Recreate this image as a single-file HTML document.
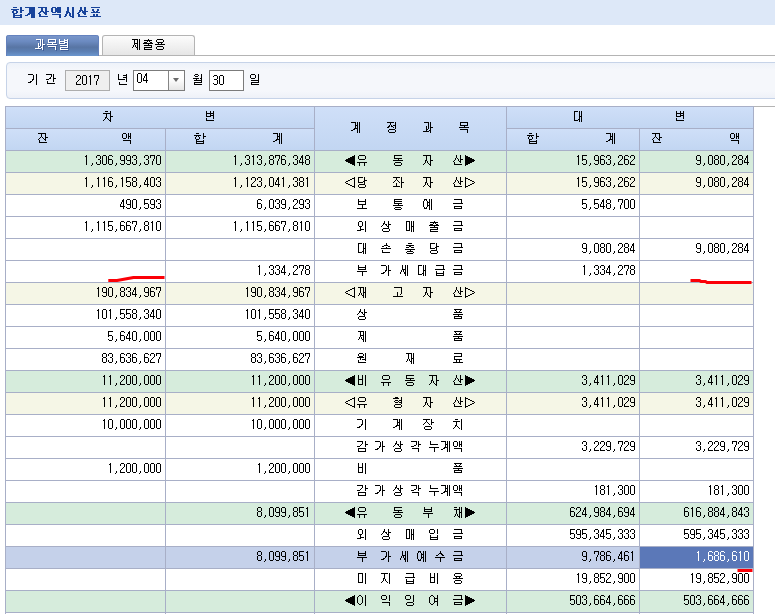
<!DOCTYPE html>
<html lang="ko">
<head>
<meta charset="utf-8">
<title>합계잔액시산표</title>
<style>
html,body{margin:0;padding:0}
body{width:775px;height:614px;overflow:hidden;background:#fff;position:relative;font-family:"Liberation Sans",sans-serif;font-size:12px;color:#000}
.h{position:absolute;width:1px;height:1px;margin:-1px;padding:0;overflow:hidden;clip:rect(0 0 0 0);clip-path:inset(50%);white-space:nowrap;font-size:1px;line-height:1px;color:transparent}
svg.t{display:inline-block;vertical-align:top;fill:#000;stroke:none;shape-rendering:crispEdges;overflow:visible}
svg.t.w{fill:#fff}
svg.t.b{fill:#17439b}
.title{position:absolute;left:0;top:0;width:775px;height:25px;background:#dde8f8}
.title svg{position:absolute;left:11px;top:7px}
.tabs{position:absolute;left:6px;top:35px;width:769px;height:20px;border-bottom:1px solid #b4b4b4}
.tab{position:absolute;top:0;height:20px;box-sizing:border-box;text-align:left;border:1px solid #b4b4b4;border-bottom:0;border-radius:3px 3px 0 0;background:linear-gradient(#fcfcfc,#e6e6e6);left:96px;width:93px}
.tab svg{margin-top:3px}
.tab.on{left:0;width:93px;height:21px;border:0;background:linear-gradient(#5b79b9 0,#7895c9 7%,#6c8bc1 30%,#5875a4 58%,#5c7fb3 78%,#6b96ce 100%);box-shadow:inset 1px 0 0 #6380bb,inset -1px 0 0 #6380bb}
.tab.on svg{margin-top:4px;filter:drop-shadow(1px 1px 0 rgba(40,70,135,.55))}
.filter{position:absolute;left:6px;top:62px;width:800px;height:35px;border:1px solid #c6d3e8;border-radius:4px;background:linear-gradient(#eef2f9,#f5f7fb 20%,#f5f7fb 80%,#eef1f8)}
.filter>span{position:absolute}
.lb{top:11px}
.inp,.sel{top:7px;height:19px;border:1px solid #7b7b7b;background:#fff;box-sizing:content-box}
.inp svg{position:absolute;left:2px;top:4px}
.inp.ro{background:#efefef;border-color:#adadad}
.inp.ro svg{left:9px;top:4px}
.sel svg{position:absolute;left:2px;top:2px}
.dd{position:absolute;right:0;top:0;width:15px;height:19px;border-left:1px solid #858585;background:linear-gradient(#fff 40%,#e6e6e6)}
.dd b{position:absolute;left:4px;top:7px;width:0;height:0;border-left:3.5px solid transparent;border-right:3.5px solid transparent;border-top:4px solid #6a6a6a}
.grid{position:absolute;left:5px;top:106px;width:770px;height:508px;overflow:hidden}
.grid:before{content:"";position:absolute;left:0;top:0;width:770px;height:1px;background:#b4b4b4}
table{position:absolute;left:0;top:0;border-collapse:separate;table-layout:fixed;width:749px;border-left:1px solid #a8afc7;border-top:1px solid #a8afc7}
th,td{height:21px;padding:0;border-right:1px solid #a8afc7;border-bottom:1px solid #a8afc7;text-align:right;font-weight:normal;line-height:0;vertical-align:top;overflow:hidden;white-space:nowrap}
th{background:linear-gradient(#cfdff8,#c2d6f2);text-align:left}
th svg{margin-top:4px}
th.h2 svg{margin-top:15px}
td svg{margin:4px 4px 0 0}
td.n{text-align:left}
td.n svg{margin-right:0}
tr.g td{background:#d6ecdc}
tr.c td{background:#f5f6e6}
tr.s td{background:#c5d1ea}
tr.s td.cur{background:#5b78b8}
.marks{position:absolute;left:0;top:0;pointer-events:none}
.marks path{fill:none;stroke:#fb0007;stroke-width:3;stroke-linejoin:round}

</style>
</head>
<body>
<svg width="0" height="0" style="position:absolute" aria-hidden="true"><defs><path id="g23" d="M5 1v3h1v-3zM5 5v4h1v-4zM2 0h3v1h-3zM1 1h1v1h-1zM2 4h3v1h-3zM1 8h1v1h-1zM2 9h3v1h-3z"/><path id="g2c" d="M3 8v2h1v-2zM2 10h1v1h-1z"/><path id="g30" d="M1 1v8h1v-8zM5 1v8h1v-8zM2 0h3v1h-3zM2 9h3v1h-3z"/><path id="g31" d="M3 0v10h1v-10zM2 1h1v1h-1z"/><path id="g32" d="M1 1v2h1v-2zM1 7v3h1v-3zM5 1v3h1v-3zM2 0h3v1h-3zM4 4h1v1h-1zM3 5h1v1h-1zM2 6h1v1h-1zM2 9h4v1h-4z"/><path id="g33" d="M1 1v2h1v-2zM1 7v2h1v-2zM5 1v3h1v-3zM5 5v4h1v-4zM2 0h3v1h-3zM3 4h2v1h-2zM2 9h3v1h-3z"/><path id="g34" d="M1 5v3h1v-3zM2 3v2h1v-2zM3 1v2h1v-2zM4 0v10h1v-10zM2 7h2v1h-2zM5 7h1v1h-1z"/><path id="g35" d="M1 0v6h1v-6zM5 5v4h1v-4zM2 0h4v1h-4zM2 4h3v1h-3zM1 8h1v1h-1zM2 9h3v1h-3z"/><path id="g36" d="M1 1v8h1v-8zM5 5v4h1v-4zM2 0h3v1h-3zM5 1h1v1h-1zM2 4h3v1h-3zM2 9h3v1h-3z"/><path id="g37" d="M1 0v3h1v-3zM3 6v4h1v-4zM4 4v2h1v-2zM5 0v4h1v-4zM2 0h3v1h-3z"/><path id="g38" d="M1 1v3h1v-3zM1 5v4h1v-4zM5 1v3h1v-3zM5 5v4h1v-4zM2 0h3v1h-3zM2 4h3v1h-3zM2 9h3v1h-3z"/><path id="g39" d="M1 1v4h1v-4zM5 1v8h1v-8zM2 0h3v1h-3zM2 5h3v1h-3zM1 8h1v1h-1zM2 9h3v1h-3z"/><path id="g25b6" d="M1 0v11h1v-11zM2 1v9h1v-9zM3 1v9h1v-9zM4 2v7h1v-7zM5 2v7h1v-7zM6 3v5h1v-5zM7 3v5h1v-5zM8 4v3h1v-3zM9 4v3h1v-3zM10 5h1v1h-1z"/><path id="g25b7" d="M1 0v11h1v-11zM2 1h2v1h-2zM4 2h2v1h-2zM6 3h2v1h-2zM8 4h2v1h-2zM10 5h1v1h-1zM8 6h2v1h-2zM6 7h2v1h-2zM4 8h2v1h-2zM2 9h2v1h-2z"/><path id="g25c0" d="M2 4v3h1v-3zM3 4v3h1v-3zM4 3v5h1v-5zM5 3v5h1v-5zM6 2v7h1v-7zM7 2v7h1v-7zM8 1v9h1v-9zM9 1v9h1v-9zM10 0v11h1v-11zM1 5h1v1h-1z"/><path id="g25c1" d="M10 0v11h1v-11zM8 1h2v1h-2zM6 2h2v1h-2zM4 3h2v1h-2zM2 4h2v1h-2zM1 5h1v1h-1zM2 6h2v1h-2zM4 7h2v1h-2zM6 8h2v1h-2zM8 9h2v1h-2z"/><path id="gac00" d="M3 7v2h1v-2zM5 5v2h1v-2zM6 1v5h1v-5zM8 0v11h1v-11zM1 0h5v1h-5zM9 5h2v1h-2zM4 7h1v1h-1zM1 8h2v1h-2z"/><path id="gac01" d="M6 0v4h1v-4zM8 0v6h1v-6zM8 7v4h1v-4zM1 0h5v1h-5zM9 3h2v1h-2zM4 4h2v1h-2zM1 5h3v1h-3zM2 7h6v1h-6z"/><path id="gac04" d="M2 7v3h1v-3zM5 3v2h1v-2zM6 0v3h1v-3zM8 0v8h1v-8zM1 0h5v1h-5zM4 4h1v1h-1zM9 4h2v1h-2zM1 5h3v1h-3zM3 9h7v1h-7z"/><path id="gac10" d="M2 7v4h1v-4zM6 0v3h1v-3zM9 0v6h1v-6zM9 7v4h1v-4zM1 0h5v1h-5zM5 3h1v1h-1zM10 3h2v1h-2zM4 4h1v1h-1zM1 5h3v1h-3zM3 7h6v1h-6zM3 10h6v1h-6z"/><path id="gacc4" d="M4 6v2h1v-2zM5 0v7h1v-7zM7 0v11h1v-11zM9 0v11h1v-11zM1 0h4v1h-4zM6 3h1v1h-1zM6 6h1v1h-1zM3 7h1v1h-1zM1 8h2v1h-2z"/><path id="gace0" d="M5 5v5h1v-5zM9 0v7h1v-7zM2 0h7v1h-7zM8 7h1v1h-1zM1 9h4v1h-4zM6 9h5v1h-5z"/><path id="gacfc" d="M4 4v6h1v-6zM6 0v7h1v-7zM8 0v11h1v-11zM2 0h4v1h-4zM9 5h2v1h-2zM5 7h1v1h-1zM7 8h1v1h-1zM1 9h3v1h-3zM5 9h2v1h-2z"/><path id="gae08" d="M2 7v3h1v-3zM9 0v5h1v-5zM9 7v3h1v-3zM2 0h7v1h-7zM1 4h8v1h-8zM10 4h1v1h-1zM3 7h6v1h-6zM3 9h6v1h-6z"/><path id="gae09" d="M2 6v5h1v-5zM9 0v5h1v-5zM9 6v5h1v-5zM2 0h7v1h-7zM1 4h8v1h-8zM10 4h1v1h-1zM3 8h6v1h-6zM3 10h6v1h-6z"/><path id="gae30" d="M3 7v2h1v-2zM5 5v2h1v-2zM6 1v5h1v-5zM9 0v11h1v-11zM1 0h5v1h-5zM4 7h1v1h-1zM1 8h2v1h-2z"/><path id="gb144" d="M1 0v6h1v-6zM2 8v3h1v-3zM9 0v8h1v-8zM6 1h3v1h-3zM6 3h3v1h-3zM2 5h6v1h-6zM3 10h7v1h-7z"/><path id="gb204" d="M2 0v4h1v-4zM6 6v5h1v-5zM3 3h7v1h-7zM1 6h5v1h-5zM7 6h4v1h-4z"/><path id="gb2f9" d="M2 0v6h1v-6zM2 8v2h1v-2zM8 0v8h1v-8zM9 8v2h1v-2zM3 0h4v1h-4zM9 3h2v1h-2zM7 4h1v1h-1zM3 5h4v1h-4zM3 7h5v1h-5zM3 10h6v1h-6z"/><path id="gb300" d="M2 0v10h1v-10zM7 0v11h1v-11zM9 0v11h1v-11zM3 0h3v1h-3zM8 5h1v1h-1zM6 8h1v1h-1zM3 9h3v1h-3z"/><path id="gb3d9" d="M2 0v4h1v-4zM2 8v2h1v-2zM6 3v3h1v-3zM9 8v2h1v-2zM3 0h7v1h-7zM3 3h3v1h-3zM7 3h3v1h-3zM1 5h5v1h-5zM7 5h4v1h-4zM3 7h6v1h-6zM3 10h6v1h-6z"/><path id="gb8cc" d="M2 3v4h1v-4zM4 6v4h1v-4zM7 6v4h1v-4zM9 0v4h1v-4zM2 0h7v1h-7zM3 3h6v1h-6zM3 6h1v1h-1zM5 6h2v1h-2zM8 6h2v1h-2zM1 9h3v1h-3zM5 9h2v1h-2zM8 9h3v1h-3z"/><path id="gb9e4" d="M2 0v10h1v-10zM5 0v10h1v-10zM7 0v11h1v-11zM9 0v11h1v-11zM3 0h2v1h-2zM8 5h1v1h-1zM3 9h2v1h-2z"/><path id="gbaa9" d="M2 0v4h1v-4zM6 3v3h1v-3zM9 0v4h1v-4zM9 7v4h1v-4zM3 0h6v1h-6zM3 3h3v1h-3zM7 3h2v1h-2zM1 5h5v1h-5zM7 5h4v1h-4zM2 7h7v1h-7z"/><path id="gbbf8" d="M2 0v10h1v-10zM6 0v10h1v-10zM9 0v11h1v-11zM3 0h3v1h-3zM3 9h3v1h-3z"/><path id="gbcc0" d="M2 0v6h1v-6zM2 7v3h1v-3zM6 0v6h1v-6zM9 0v8h1v-8zM3 2h3v1h-3zM7 2h2v1h-2zM7 4h2v1h-2zM3 5h3v1h-3zM3 9h7v1h-7z"/><path id="gbcc4" d="M1 0v5h1v-5zM2 8v3h1v-3zM6 0v5h1v-5zM9 0v9h1v-9zM7 1h2v1h-2zM2 2h4v1h-4zM7 3h2v1h-2zM2 4h4v1h-4zM2 6h7v1h-7zM3 8h6v1h-6zM3 10h7v1h-7z"/><path id="gbcf4" d="M2 0v6h1v-6zM6 5v5h1v-5zM9 0v6h1v-6zM3 2h6v1h-6zM3 5h3v1h-3zM7 5h2v1h-2zM1 9h5v1h-5zM7 9h4v1h-4z"/><path id="gbd80" d="M2 0v5h1v-5zM6 6v5h1v-5zM9 0v5h1v-5zM3 2h6v1h-6zM3 4h6v1h-6zM1 6h5v1h-5zM7 6h4v1h-4z"/><path id="gbe44" d="M2 0v10h1v-10zM6 0v10h1v-10zM9 0v11h1v-11zM3 4h3v1h-3zM3 9h3v1h-3z"/><path id="gc0b0" d="M2 7v3h1v-3zM3 3v2h1v-2zM4 0v3h1v-3zM6 4v2h1v-2zM8 0v8h1v-8zM5 3h1v1h-1zM9 4h2v1h-2zM2 5h1v1h-1zM1 6h1v1h-1zM7 6h1v1h-1zM3 9h7v1h-7z"/><path id="gc0c1" d="M2 8v2h1v-2zM3 2v2h1v-2zM4 0v3h1v-3zM6 3v2h1v-2zM8 0v8h1v-8zM9 8v2h1v-2zM5 3h1v1h-1zM9 3h2v1h-2zM2 4h1v1h-1zM1 5h1v1h-1zM7 5h1v1h-1zM3 7h5v1h-5zM3 10h6v1h-6z"/><path id="gc138" d="M2 7v2h1v-2zM3 5v2h1v-2zM4 0v5h1v-5zM5 4v3h1v-3zM6 7v2h1v-2zM7 0v11h1v-11zM9 0v11h1v-11zM6 4h1v1h-1z"/><path id="gc190" d="M2 7v3h1v-3zM6 0v3h1v-3zM6 4v2h1v-2zM4 2h2v1h-2zM7 2h1v1h-1zM2 3h2v1h-2zM8 3h2v1h-2zM1 5h5v1h-5zM7 5h4v1h-4zM3 9h7v1h-7z"/><path id="gc218" d="M6 0v3h1v-3zM6 6v5h1v-5zM7 2v2h1v-2zM8 3v2h1v-2zM5 2h1v1h-1zM4 3h1v1h-1zM2 4h2v1h-2zM9 4h1v1h-1zM1 6h5v1h-5zM7 6h4v1h-4z"/><path id="gc2dc" d="M2 7v2h1v-2zM3 4v3h1v-3zM4 0v5h1v-5zM6 6v3h1v-3zM9 0v11h1v-11zM5 5h1v1h-1zM1 9h1v1h-1zM7 9h1v1h-1z"/><path id="gc561" d="M1 1v4h1v-4zM5 1v4h1v-4zM7 0v6h1v-6zM9 0v6h1v-6zM9 7v4h1v-4zM2 0h3v1h-3zM8 3h1v1h-1zM2 5h3v1h-3zM2 7h7v1h-7z"/><path id="gc5ec" d="M1 2v6h1v-6zM6 2v6h1v-6zM9 0v11h1v-11zM3 0h2v1h-2zM2 1h1v1h-1zM5 1h1v1h-1zM7 3h2v1h-2zM7 6h2v1h-2zM2 8h1v1h-1zM5 8h1v1h-1zM3 9h2v1h-2z"/><path id="gc608" d="M1 2v6h1v-6zM2 0v2h1v-2zM2 8v2h1v-2zM4 0v2h1v-2zM4 8v2h1v-2zM5 2v6h1v-6zM7 0v11h1v-11zM9 0v11h1v-11zM3 0h1v1h-1zM6 3h1v1h-1zM6 6h1v1h-1zM3 9h1v1h-1z"/><path id="gc678" d="M2 1v4h1v-4zM4 5v5h1v-5zM6 1v4h1v-4zM9 0v11h1v-11zM3 0h3v1h-3zM3 5h1v1h-1zM5 5h1v1h-1zM5 8h3v1h-3zM1 9h3v1h-3z"/><path id="gc6a9" d="M2 1v2h1v-2zM2 8v2h1v-2zM4 3v3h1v-3zM7 3v3h1v-3zM9 1v2h1v-2zM9 8v2h1v-2zM3 0h6v1h-6zM3 3h1v1h-1zM5 3h2v1h-2zM8 3h1v1h-1zM1 5h3v1h-3zM5 5h2v1h-2zM8 5h3v1h-3zM3 7h6v1h-6zM3 10h6v1h-6z"/><path id="gc6d0" d="M2 1v2h1v-2zM2 7v3h1v-3zM3 3v2h1v-2zM4 3v4h1v-4zM5 3v2h1v-2zM6 3v2h1v-2zM7 1v2h1v-2zM9 0v8h1v-8zM3 0h4v1h-4zM1 4h2v1h-2zM7 4h1v1h-1zM6 6h3v1h-3zM3 9h7v1h-7z"/><path id="gc6d4" d="M1 8v3h1v-3zM3 4v3h1v-3zM8 0v9h1v-9zM2 0h3v1h-3zM1 1h1v1h-1zM5 1h1v1h-1zM2 2h3v1h-3zM0 4h3v1h-3zM4 4h2v1h-2zM7 4h1v1h-1zM1 6h2v1h-2zM4 6h4v1h-4zM2 8h6v1h-6zM2 10h7v1h-7z"/><path id="gc720" d="M2 1v3h1v-3zM3 7v4h1v-4zM8 7v4h1v-4zM9 1v3h1v-3zM3 0h6v1h-6zM3 4h6v1h-6zM1 7h2v1h-2zM4 7h4v1h-4zM9 7h2v1h-2z"/><path id="gc774" d="M1 2v6h1v-6zM6 2v6h1v-6zM9 0v11h1v-11zM3 0h2v1h-2zM2 1h1v1h-1zM5 1h1v1h-1zM2 8h1v1h-1zM5 8h1v1h-1zM3 9h2v1h-2z"/><path id="gc775" d="M1 1v3h1v-3zM6 1v3h1v-3zM9 0v6h1v-6zM9 7v4h1v-4zM2 0h4v1h-4zM2 4h4v1h-4zM2 7h7v1h-7z"/><path id="gc77c" d="M1 1v3h1v-3zM2 8v3h1v-3zM6 1v3h1v-3zM9 0v9h1v-9zM2 0h4v1h-4zM2 4h4v1h-4zM2 6h7v1h-7zM3 8h6v1h-6zM3 10h7v1h-7z"/><path id="gc785" d="M1 1v3h1v-3zM2 6v5h1v-5zM6 1v3h1v-3zM9 0v5h1v-5zM9 6v5h1v-5zM2 0h4v1h-4zM2 4h4v1h-4zM3 8h6v1h-6zM3 10h6v1h-6z"/><path id="gc789" d="M1 1v3h1v-3zM2 8v2h1v-2zM6 1v3h1v-3zM9 0v7h1v-7zM9 8v2h1v-2zM2 0h4v1h-4zM2 4h4v1h-4zM3 7h6v1h-6zM3 10h6v1h-6z"/><path id="gc790" d="M3 5v3h1v-3zM4 0v6h1v-6zM5 6v2h1v-2zM8 0v11h1v-11zM1 0h3v1h-3zM5 0h3v1h-3zM9 5h2v1h-2zM2 8h1v1h-1zM6 8h1v1h-1zM1 9h1v1h-1zM7 9h1v1h-1z"/><path id="gc794" d="M2 7v3h1v-3zM4 0v4h1v-4zM8 0v8h1v-8zM1 0h3v1h-3zM5 0h3v1h-3zM3 4h1v1h-1zM5 4h1v1h-1zM9 4h2v1h-2zM2 5h1v1h-1zM6 5h1v1h-1zM1 6h1v1h-1zM7 6h1v1h-1zM3 9h7v1h-7z"/><path id="gc7a5" d="M2 8v2h1v-2zM4 0v3h1v-3zM9 0v6h1v-6zM9 8v2h1v-2zM1 0h3v1h-3zM5 0h3v1h-3zM3 3h1v1h-1zM5 3h1v1h-1zM10 3h2v1h-2zM2 4h1v1h-1zM6 4h1v1h-1zM1 5h1v1h-1zM7 5h1v1h-1zM3 7h6v1h-6zM3 10h6v1h-6z"/><path id="gc7ac" d="M3 6v2h1v-2zM4 0v6h1v-6zM5 6v2h1v-2zM7 0v11h1v-11zM9 0v11h1v-11zM2 0h2v1h-2zM5 0h2v1h-2zM8 5h1v1h-1zM2 8h1v1h-1zM6 8h1v1h-1z"/><path id="gc815" d="M2 4v2h1v-2zM2 8v2h1v-2zM3 3v2h1v-2zM4 0v3h1v-3zM5 3v2h1v-2zM9 0v7h1v-7zM9 8v2h1v-2zM1 0h3v1h-3zM5 0h3v1h-3zM7 3h2v1h-2zM6 4h1v1h-1zM1 5h1v1h-1zM7 5h1v1h-1zM3 7h6v1h-6zM3 10h6v1h-6z"/><path id="gc81c" d="M3 6v2h1v-2zM4 0v6h1v-6zM5 6v2h1v-2zM7 0v11h1v-11zM9 0v11h1v-11zM2 0h2v1h-2zM5 0h2v1h-2zM5 4h2v1h-2zM2 8h1v1h-1zM6 8h1v1h-1z"/><path id="gc88c" d="M4 0v3h1v-3zM4 6v4h1v-4zM9 0v11h1v-11zM1 0h3v1h-3zM5 0h3v1h-3zM3 3h1v1h-1zM5 3h1v1h-1zM2 4h1v1h-1zM6 4h1v1h-1zM1 5h1v1h-1zM7 5h1v1h-1zM10 5h2v1h-2zM1 9h3v1h-3zM5 9h3v1h-3z"/><path id="gc9c0" d="M3 5v3h1v-3zM4 0v6h1v-6zM5 6v2h1v-2zM9 0v11h1v-11zM1 0h3v1h-3zM5 0h3v1h-3zM2 8h1v1h-1zM6 8h1v1h-1zM1 9h1v1h-1zM7 9h1v1h-1z"/><path id="gcc28" d="M3 6v2h1v-2zM4 2v5h1v-5zM8 0v11h1v-11zM3 0h3v1h-3zM1 2h3v1h-3zM5 2h3v1h-3zM9 5h2v1h-2zM5 7h1v1h-1zM2 8h1v1h-1zM6 8h1v1h-1zM1 9h1v1h-1zM7 9h1v1h-1z"/><path id="gcc44" d="M3 7v2h1v-2zM4 2v5h1v-5zM5 7v2h1v-2zM7 0v11h1v-11zM9 0v11h1v-11zM2 0h3v1h-3zM2 2h2v1h-2zM5 2h2v1h-2zM8 5h1v1h-1zM2 9h1v1h-1zM6 9h1v1h-1z"/><path id="gcd9c" d="M2 3v2h1v-2zM2 8v3h1v-3zM3 3v2h1v-2zM4 3v2h1v-2zM5 1v2h1v-2zM6 0v2h1v-2zM6 4v3h1v-3zM7 1v2h1v-2zM8 3v2h1v-2zM9 3v2h1v-2zM9 6v3h1v-3zM2 1h3v1h-3zM8 1h2v1h-2zM1 4h1v1h-1zM5 4h1v1h-1zM7 4h1v1h-1zM10 4h1v1h-1zM2 6h4v1h-4zM7 6h2v1h-2zM3 8h6v1h-6zM3 10h7v1h-7z"/><path id="gcda9" d="M5 2v2h1v-2zM6 2v2h1v-2zM6 6v3h1v-3zM4 0h4v1h-4zM2 2h3v1h-3zM7 2h3v1h-3zM2 4h3v1h-3zM7 4h3v1h-3zM1 6h5v1h-5zM7 6h4v1h-4zM3 8h3v1h-3zM7 8h2v1h-2zM2 9h1v1h-1zM9 9h1v1h-1zM3 10h6v1h-6z"/><path id="gce58" d="M3 6v2h1v-2zM4 2v5h1v-5zM9 0v11h1v-11zM3 0h3v1h-3zM1 2h3v1h-3zM5 2h3v1h-3zM5 7h1v1h-1zM2 8h1v1h-1zM6 8h1v1h-1zM1 9h1v1h-1zM7 9h1v1h-1z"/><path id="gd1b5" d="M2 0v5h1v-5zM6 4v3h1v-3zM3 0h7v1h-7zM3 2h7v1h-7zM3 4h3v1h-3zM7 4h3v1h-3zM1 6h5v1h-5zM7 6h4v1h-4zM3 8h6v1h-6zM2 9h1v1h-1zM9 9h1v1h-1zM3 10h6v1h-6z"/><path id="gd45c" d="M3 2v2h1v-2zM4 4v2h1v-2zM4 7v3h1v-3zM7 4v2h1v-2zM7 7v3h1v-3zM8 2v2h1v-2zM2 0h8v1h-8zM2 5h2v1h-2zM5 5h2v1h-2zM8 5h2v1h-2zM1 9h3v1h-3zM5 9h2v1h-2zM8 9h3v1h-3z"/><path id="gd488" d="M2 7v3h1v-3zM3 0v2h1v-2zM4 2v2h1v-2zM6 5v3h1v-3zM7 2v2h1v-2zM8 0v2h1v-2zM9 7v3h1v-3zM2 0h1v1h-1zM4 0h4v1h-4zM9 0h1v1h-1zM2 3h2v1h-2zM5 3h2v1h-2zM8 3h2v1h-2zM1 5h5v1h-5zM7 5h4v1h-4zM3 7h3v1h-3zM7 7h2v1h-2zM3 9h6v1h-6z"/><path id="gd569" d="M1 4v2h1v-2zM2 2v2h1v-2zM2 6v5h1v-5zM4 2v2h1v-2zM5 4v2h1v-2zM9 0v6h1v-6zM9 7v4h1v-4zM2 0h3v1h-3zM0 2h2v1h-2zM3 2h1v1h-1zM5 2h2v1h-2zM10 3h2v1h-2zM3 6h2v1h-2zM3 8h6v1h-6zM3 10h6v1h-6z"/><path id="gd615" d="M2 8v2h1v-2zM3 0v2h1v-2zM4 0v2h1v-2zM5 0v2h1v-2zM9 0v7h1v-7zM9 8v2h1v-2zM1 1h2v1h-2zM6 1h1v1h-1zM3 3h3v1h-3zM7 3h2v1h-2zM2 4h1v1h-1zM6 4h1v1h-1zM3 5h3v1h-3zM7 5h2v1h-2zM3 7h6v1h-6zM3 10h6v1h-6z"/></defs></svg>
<div class="title"><span class="h">합계잔액시산표</span><svg class="t b" width="91" height="12" viewBox="0 0 91 12" aria-hidden="true"><use href="#gd569" x="0"/><use href="#gd569" x="1"/><use href="#gacc4" x="13"/><use href="#gacc4" x="14"/><use href="#gc794" x="26"/><use href="#gc794" x="27"/><use href="#gc561" x="39"/><use href="#gc561" x="40"/><use href="#gc2dc" x="52"/><use href="#gc2dc" x="53"/><use href="#gc0b0" x="65"/><use href="#gc0b0" x="66"/><use href="#gd45c" x="78"/><use href="#gd45c" x="79"/></svg></div>
<div class="tabs"><div class="tab on"><span class="h">과목별</span><svg class="t w" width="36" height="12" viewBox="0 0 36 12" aria-hidden="true" style="margin-left:28px"><use href="#gacfc" x="0"/><use href="#gbaa9" x="12"/><use href="#gbcc4" x="24"/></svg></div><div class="tab"><span class="h">제출용</span><svg class="t" width="36" height="12" viewBox="0 0 36 12" aria-hidden="true" style="margin-left:27px"><use href="#gc81c" x="0"/><use href="#gcd9c" x="12"/><use href="#gc6a9" x="24"/></svg></div></div>
<div class="filter"><span class="lb" style="left:20px"><span class="h">기간</span><svg class="t" width="30" height="12" viewBox="0 0 30 12" aria-hidden="true"><use href="#gae30" x="0"/><use href="#gac04" x="18"/></svg></span><span class="inp ro" style="left:58px;width:43px"><span class="h">2017</span><svg class="t" width="24" height="12" viewBox="0 0 24 12" aria-hidden="true"><use href="#g32" x="0"/><use href="#g30" x="6"/><use href="#g31" x="12"/><use href="#g37" x="18"/></svg></span><span class="lb" style="left:110px"><span class="h">년</span><svg class="t" width="12" height="12" viewBox="0 0 12 12" aria-hidden="true"><use href="#gb144" x="0"/></svg></span><span class="sel" style="left:126px;width:50px"><span class="h">04</span><svg class="t" width="12" height="12" viewBox="0 0 12 12" aria-hidden="true"><use href="#g30" x="0"/><use href="#g34" x="6"/></svg><i class="dd"><b></b></i></span><span class="lb" style="left:186px"><span class="h">월</span><svg class="t" width="12" height="12" viewBox="0 0 12 12" aria-hidden="true"><use href="#gc6d4" x="0"/></svg></span><span class="inp" style="left:202px;width:33px"><span class="h">30</span><svg class="t" width="12" height="12" viewBox="0 0 12 12" aria-hidden="true"><use href="#g23" x="0"/><use href="#g30" x="6"/></svg></span><span class="lb" style="left:242px"><span class="h">일</span><svg class="t" width="12" height="12" viewBox="0 0 12 12" aria-hidden="true"><use href="#gc77c" x="0"/></svg></span></div>
<div class="grid"><table cellspacing="0" cellpadding="0">
<colgroup><col style="width:160px"><col style="width:149px"><col style="width:192px"><col style="width:133px"><col style="width:114px"></colgroup>
<thead><tr><th colspan="2"><span class="h">차변</span><svg class="t" width="114" height="12" viewBox="0 0 114 12" aria-hidden="true" style="margin-left:96px"><use href="#gcc28" x="0"/><use href="#gbcc0" x="102"/></svg></th><th rowspan="2" class="h2"><span class="h">계정과목</span><svg class="t" width="120" height="12" viewBox="0 0 120 12" aria-hidden="true" style="margin-left:35px"><use href="#gacc4" x="0"/><use href="#gc815" x="36"/><use href="#gacfc" x="72"/><use href="#gbaa9" x="108"/></svg></th><th colspan="2"><span class="h">대변</span><svg class="t" width="114" height="12" viewBox="0 0 114 12" aria-hidden="true" style="margin-left:65px"><use href="#gb300" x="0"/><use href="#gbcc0" x="102"/></svg></th></tr>
<tr><th><span class="h">잔액</span><svg class="t" width="96" height="12" viewBox="0 0 96 12" aria-hidden="true" style="margin-left:31px"><use href="#gc794" x="0"/><use href="#gc561" x="84"/></svg></th><th><span class="h">합계</span><svg class="t" width="90" height="12" viewBox="0 0 90 12" aria-hidden="true" style="margin-left:28px"><use href="#gd569" x="0"/><use href="#gacc4" x="78"/></svg></th><th><span class="h">합계</span><svg class="t" width="90" height="12" viewBox="0 0 90 12" aria-hidden="true" style="margin-left:20px"><use href="#gd569" x="0"/><use href="#gacc4" x="78"/></svg></th><th><span class="h">잔액</span><svg class="t" width="90" height="12" viewBox="0 0 90 12" aria-hidden="true" style="margin-left:11px"><use href="#gc794" x="0"/><use href="#gc561" x="78"/></svg></th></tr></thead><tbody>
<tr class="g"><td><span class="h">1,306,993,370</span><svg class="t" width="78" height="12" viewBox="0 0 78 12" aria-hidden="true"><use href="#g31" x="0"/><use href="#g2c" x="6"/><use href="#g33" x="12"/><use href="#g30" x="18"/><use href="#g36" x="24"/><use href="#g2c" x="30"/><use href="#g39" x="36"/><use href="#g39" x="42"/><use href="#g33" x="48"/><use href="#g2c" x="54"/><use href="#g33" x="60"/><use href="#g37" x="66"/><use href="#g30" x="72"/></svg></td><td><span class="h">1,313,876,348</span><svg class="t" width="78" height="12" viewBox="0 0 78 12" aria-hidden="true"><use href="#g31" x="0"/><use href="#g2c" x="6"/><use href="#g33" x="12"/><use href="#g31" x="18"/><use href="#g33" x="24"/><use href="#g2c" x="30"/><use href="#g38" x="36"/><use href="#g37" x="42"/><use href="#g36" x="48"/><use href="#g2c" x="54"/><use href="#g33" x="60"/><use href="#g34" x="66"/><use href="#g38" x="72"/></svg></td><td class="n"><span class="h">◀유동자산▶</span><svg class="t" width="132" height="12" viewBox="0 0 132 12" aria-hidden="true" style="margin-left:29px"><use href="#g25c0" x="0"/><use href="#gc720" x="12"/><use href="#gb3d9" x="48"/><use href="#gc790" x="78"/><use href="#gc0b0" x="108"/><use href="#g25b6" x="120"/></svg></td><td><span class="h">15,963,262</span><svg class="t" width="60" height="12" viewBox="0 0 60 12" aria-hidden="true"><use href="#g31" x="0"/><use href="#g35" x="6"/><use href="#g2c" x="12"/><use href="#g39" x="18"/><use href="#g36" x="24"/><use href="#g33" x="30"/><use href="#g2c" x="36"/><use href="#g32" x="42"/><use href="#g36" x="48"/><use href="#g32" x="54"/></svg></td><td><span class="h">9,080,284</span><svg class="t" width="54" height="12" viewBox="0 0 54 12" aria-hidden="true"><use href="#g39" x="0"/><use href="#g2c" x="6"/><use href="#g30" x="12"/><use href="#g38" x="18"/><use href="#g30" x="24"/><use href="#g2c" x="30"/><use href="#g32" x="36"/><use href="#g38" x="42"/><use href="#g34" x="48"/></svg></td></tr>
<tr class="c"><td><span class="h">1,116,158,403</span><svg class="t" width="78" height="12" viewBox="0 0 78 12" aria-hidden="true"><use href="#g31" x="0"/><use href="#g2c" x="6"/><use href="#g31" x="12"/><use href="#g31" x="18"/><use href="#g36" x="24"/><use href="#g2c" x="30"/><use href="#g31" x="36"/><use href="#g35" x="42"/><use href="#g38" x="48"/><use href="#g2c" x="54"/><use href="#g34" x="60"/><use href="#g30" x="66"/><use href="#g33" x="72"/></svg></td><td><span class="h">1,123,041,381</span><svg class="t" width="78" height="12" viewBox="0 0 78 12" aria-hidden="true"><use href="#g31" x="0"/><use href="#g2c" x="6"/><use href="#g31" x="12"/><use href="#g32" x="18"/><use href="#g33" x="24"/><use href="#g2c" x="30"/><use href="#g30" x="36"/><use href="#g34" x="42"/><use href="#g31" x="48"/><use href="#g2c" x="54"/><use href="#g33" x="60"/><use href="#g38" x="66"/><use href="#g31" x="72"/></svg></td><td class="n"><span class="h">◁당좌자산▷</span><svg class="t" width="132" height="12" viewBox="0 0 132 12" aria-hidden="true" style="margin-left:29px"><use href="#g25c1" x="0"/><use href="#gb2f9" x="12"/><use href="#gc88c" x="48"/><use href="#gc790" x="78"/><use href="#gc0b0" x="108"/><use href="#g25b7" x="120"/></svg></td><td><span class="h">15,963,262</span><svg class="t" width="60" height="12" viewBox="0 0 60 12" aria-hidden="true"><use href="#g31" x="0"/><use href="#g35" x="6"/><use href="#g2c" x="12"/><use href="#g39" x="18"/><use href="#g36" x="24"/><use href="#g33" x="30"/><use href="#g2c" x="36"/><use href="#g32" x="42"/><use href="#g36" x="48"/><use href="#g32" x="54"/></svg></td><td><span class="h">9,080,284</span><svg class="t" width="54" height="12" viewBox="0 0 54 12" aria-hidden="true"><use href="#g39" x="0"/><use href="#g2c" x="6"/><use href="#g30" x="12"/><use href="#g38" x="18"/><use href="#g30" x="24"/><use href="#g2c" x="30"/><use href="#g32" x="36"/><use href="#g38" x="42"/><use href="#g34" x="48"/></svg></td></tr>
<tr><td><span class="h">490,593</span><svg class="t" width="42" height="12" viewBox="0 0 42 12" aria-hidden="true"><use href="#g34" x="0"/><use href="#g39" x="6"/><use href="#g30" x="12"/><use href="#g2c" x="18"/><use href="#g35" x="24"/><use href="#g39" x="30"/><use href="#g33" x="36"/></svg></td><td><span class="h">6,039,293</span><svg class="t" width="54" height="12" viewBox="0 0 54 12" aria-hidden="true"><use href="#g36" x="0"/><use href="#g2c" x="6"/><use href="#g30" x="12"/><use href="#g33" x="18"/><use href="#g39" x="24"/><use href="#g2c" x="30"/><use href="#g32" x="36"/><use href="#g39" x="42"/><use href="#g33" x="48"/></svg></td><td class="n"><span class="h">보통예금</span><svg class="t" width="108" height="12" viewBox="0 0 108 12" aria-hidden="true" style="margin-left:41px"><use href="#gbcf4" x="0"/><use href="#gd1b5" x="36"/><use href="#gc608" x="66"/><use href="#gae08" x="96"/></svg></td><td><span class="h">5,548,700</span><svg class="t" width="54" height="12" viewBox="0 0 54 12" aria-hidden="true"><use href="#g35" x="0"/><use href="#g2c" x="6"/><use href="#g35" x="12"/><use href="#g34" x="18"/><use href="#g38" x="24"/><use href="#g2c" x="30"/><use href="#g37" x="36"/><use href="#g30" x="42"/><use href="#g30" x="48"/></svg></td><td></td></tr>
<tr><td><span class="h">1,115,667,810</span><svg class="t" width="78" height="12" viewBox="0 0 78 12" aria-hidden="true"><use href="#g31" x="0"/><use href="#g2c" x="6"/><use href="#g31" x="12"/><use href="#g31" x="18"/><use href="#g35" x="24"/><use href="#g2c" x="30"/><use href="#g36" x="36"/><use href="#g36" x="42"/><use href="#g37" x="48"/><use href="#g2c" x="54"/><use href="#g38" x="60"/><use href="#g31" x="66"/><use href="#g30" x="72"/></svg></td><td><span class="h">1,115,667,810</span><svg class="t" width="78" height="12" viewBox="0 0 78 12" aria-hidden="true"><use href="#g31" x="0"/><use href="#g2c" x="6"/><use href="#g31" x="12"/><use href="#g31" x="18"/><use href="#g35" x="24"/><use href="#g2c" x="30"/><use href="#g36" x="36"/><use href="#g36" x="42"/><use href="#g37" x="48"/><use href="#g2c" x="54"/><use href="#g38" x="60"/><use href="#g31" x="66"/><use href="#g30" x="72"/></svg></td><td class="n"><span class="h">외상매출금</span><svg class="t" width="108" height="12" viewBox="0 0 108 12" aria-hidden="true" style="margin-left:41px"><use href="#gc678" x="0"/><use href="#gc0c1" x="24"/><use href="#gb9e4" x="48"/><use href="#gcd9c" x="72"/><use href="#gae08" x="96"/></svg></td><td></td><td></td></tr>
<tr><td></td><td></td><td class="n"><span class="h">대손충당금</span><svg class="t" width="108" height="12" viewBox="0 0 108 12" aria-hidden="true" style="margin-left:41px"><use href="#gb300" x="0"/><use href="#gc190" x="24"/><use href="#gcda9" x="48"/><use href="#gb2f9" x="72"/><use href="#gae08" x="96"/></svg></td><td><span class="h">9,080,284</span><svg class="t" width="54" height="12" viewBox="0 0 54 12" aria-hidden="true"><use href="#g39" x="0"/><use href="#g2c" x="6"/><use href="#g30" x="12"/><use href="#g38" x="18"/><use href="#g30" x="24"/><use href="#g2c" x="30"/><use href="#g32" x="36"/><use href="#g38" x="42"/><use href="#g34" x="48"/></svg></td><td><span class="h">9,080,284</span><svg class="t" width="54" height="12" viewBox="0 0 54 12" aria-hidden="true"><use href="#g39" x="0"/><use href="#g2c" x="6"/><use href="#g30" x="12"/><use href="#g38" x="18"/><use href="#g30" x="24"/><use href="#g2c" x="30"/><use href="#g32" x="36"/><use href="#g38" x="42"/><use href="#g34" x="48"/></svg></td></tr>
<tr><td></td><td><span class="h">1,334,278</span><svg class="t" width="54" height="12" viewBox="0 0 54 12" aria-hidden="true"><use href="#g31" x="0"/><use href="#g2c" x="6"/><use href="#g33" x="12"/><use href="#g33" x="18"/><use href="#g34" x="24"/><use href="#g2c" x="30"/><use href="#g32" x="36"/><use href="#g37" x="42"/><use href="#g38" x="48"/></svg></td><td class="n"><span class="h">부가세대급금</span><svg class="t" width="108" height="12" viewBox="0 0 108 12" aria-hidden="true" style="margin-left:41px"><use href="#gbd80" x="0"/><use href="#gac00" x="24"/><use href="#gc138" x="42"/><use href="#gb300" x="60"/><use href="#gae09" x="78"/><use href="#gae08" x="96"/></svg></td><td><span class="h">1,334,278</span><svg class="t" width="54" height="12" viewBox="0 0 54 12" aria-hidden="true"><use href="#g31" x="0"/><use href="#g2c" x="6"/><use href="#g33" x="12"/><use href="#g33" x="18"/><use href="#g34" x="24"/><use href="#g2c" x="30"/><use href="#g32" x="36"/><use href="#g37" x="42"/><use href="#g38" x="48"/></svg></td><td></td></tr>
<tr class="c"><td><span class="h">190,834,967</span><svg class="t" width="66" height="12" viewBox="0 0 66 12" aria-hidden="true"><use href="#g31" x="0"/><use href="#g39" x="6"/><use href="#g30" x="12"/><use href="#g2c" x="18"/><use href="#g38" x="24"/><use href="#g33" x="30"/><use href="#g34" x="36"/><use href="#g2c" x="42"/><use href="#g39" x="48"/><use href="#g36" x="54"/><use href="#g37" x="60"/></svg></td><td><span class="h">190,834,967</span><svg class="t" width="66" height="12" viewBox="0 0 66 12" aria-hidden="true"><use href="#g31" x="0"/><use href="#g39" x="6"/><use href="#g30" x="12"/><use href="#g2c" x="18"/><use href="#g38" x="24"/><use href="#g33" x="30"/><use href="#g34" x="36"/><use href="#g2c" x="42"/><use href="#g39" x="48"/><use href="#g36" x="54"/><use href="#g37" x="60"/></svg></td><td class="n"><span class="h">◁재고자산▷</span><svg class="t" width="132" height="12" viewBox="0 0 132 12" aria-hidden="true" style="margin-left:29px"><use href="#g25c1" x="0"/><use href="#gc7ac" x="12"/><use href="#gace0" x="48"/><use href="#gc790" x="78"/><use href="#gc0b0" x="108"/><use href="#g25b7" x="120"/></svg></td><td></td><td></td></tr>
<tr><td><span class="h">101,558,340</span><svg class="t" width="66" height="12" viewBox="0 0 66 12" aria-hidden="true"><use href="#g31" x="0"/><use href="#g30" x="6"/><use href="#g31" x="12"/><use href="#g2c" x="18"/><use href="#g35" x="24"/><use href="#g35" x="30"/><use href="#g38" x="36"/><use href="#g2c" x="42"/><use href="#g33" x="48"/><use href="#g34" x="54"/><use href="#g30" x="60"/></svg></td><td><span class="h">101,558,340</span><svg class="t" width="66" height="12" viewBox="0 0 66 12" aria-hidden="true"><use href="#g31" x="0"/><use href="#g30" x="6"/><use href="#g31" x="12"/><use href="#g2c" x="18"/><use href="#g35" x="24"/><use href="#g35" x="30"/><use href="#g38" x="36"/><use href="#g2c" x="42"/><use href="#g33" x="48"/><use href="#g34" x="54"/><use href="#g30" x="60"/></svg></td><td class="n"><span class="h">상품</span><svg class="t" width="108" height="12" viewBox="0 0 108 12" aria-hidden="true" style="margin-left:41px"><use href="#gc0c1" x="0"/><use href="#gd488" x="96"/></svg></td><td></td><td></td></tr>
<tr><td><span class="h">5,640,000</span><svg class="t" width="54" height="12" viewBox="0 0 54 12" aria-hidden="true"><use href="#g35" x="0"/><use href="#g2c" x="6"/><use href="#g36" x="12"/><use href="#g34" x="18"/><use href="#g30" x="24"/><use href="#g2c" x="30"/><use href="#g30" x="36"/><use href="#g30" x="42"/><use href="#g30" x="48"/></svg></td><td><span class="h">5,640,000</span><svg class="t" width="54" height="12" viewBox="0 0 54 12" aria-hidden="true"><use href="#g35" x="0"/><use href="#g2c" x="6"/><use href="#g36" x="12"/><use href="#g34" x="18"/><use href="#g30" x="24"/><use href="#g2c" x="30"/><use href="#g30" x="36"/><use href="#g30" x="42"/><use href="#g30" x="48"/></svg></td><td class="n"><span class="h">제품</span><svg class="t" width="108" height="12" viewBox="0 0 108 12" aria-hidden="true" style="margin-left:41px"><use href="#gc81c" x="0"/><use href="#gd488" x="96"/></svg></td><td></td><td></td></tr>
<tr><td><span class="h">83,636,627</span><svg class="t" width="60" height="12" viewBox="0 0 60 12" aria-hidden="true"><use href="#g38" x="0"/><use href="#g33" x="6"/><use href="#g2c" x="12"/><use href="#g36" x="18"/><use href="#g33" x="24"/><use href="#g36" x="30"/><use href="#g2c" x="36"/><use href="#g36" x="42"/><use href="#g32" x="48"/><use href="#g37" x="54"/></svg></td><td><span class="h">83,636,627</span><svg class="t" width="60" height="12" viewBox="0 0 60 12" aria-hidden="true"><use href="#g38" x="0"/><use href="#g33" x="6"/><use href="#g2c" x="12"/><use href="#g36" x="18"/><use href="#g33" x="24"/><use href="#g36" x="30"/><use href="#g2c" x="36"/><use href="#g36" x="42"/><use href="#g32" x="48"/><use href="#g37" x="54"/></svg></td><td class="n"><span class="h">원재료</span><svg class="t" width="108" height="12" viewBox="0 0 108 12" aria-hidden="true" style="margin-left:41px"><use href="#gc6d0" x="0"/><use href="#gc7ac" x="48"/><use href="#gb8cc" x="96"/></svg></td><td></td><td></td></tr>
<tr class="g"><td><span class="h">11,200,000</span><svg class="t" width="60" height="12" viewBox="0 0 60 12" aria-hidden="true"><use href="#g31" x="0"/><use href="#g31" x="6"/><use href="#g2c" x="12"/><use href="#g32" x="18"/><use href="#g30" x="24"/><use href="#g30" x="30"/><use href="#g2c" x="36"/><use href="#g30" x="42"/><use href="#g30" x="48"/><use href="#g30" x="54"/></svg></td><td><span class="h">11,200,000</span><svg class="t" width="60" height="12" viewBox="0 0 60 12" aria-hidden="true"><use href="#g31" x="0"/><use href="#g31" x="6"/><use href="#g2c" x="12"/><use href="#g32" x="18"/><use href="#g30" x="24"/><use href="#g30" x="30"/><use href="#g2c" x="36"/><use href="#g30" x="42"/><use href="#g30" x="48"/><use href="#g30" x="54"/></svg></td><td class="n"><span class="h">◀비유동자산▶</span><svg class="t" width="132" height="12" viewBox="0 0 132 12" aria-hidden="true" style="margin-left:29px"><use href="#g25c0" x="0"/><use href="#gbe44" x="12"/><use href="#gc720" x="36"/><use href="#gb3d9" x="60"/><use href="#gc790" x="84"/><use href="#gc0b0" x="108"/><use href="#g25b6" x="120"/></svg></td><td><span class="h">3,411,029</span><svg class="t" width="54" height="12" viewBox="0 0 54 12" aria-hidden="true"><use href="#g33" x="0"/><use href="#g2c" x="6"/><use href="#g34" x="12"/><use href="#g31" x="18"/><use href="#g31" x="24"/><use href="#g2c" x="30"/><use href="#g30" x="36"/><use href="#g32" x="42"/><use href="#g39" x="48"/></svg></td><td><span class="h">3,411,029</span><svg class="t" width="54" height="12" viewBox="0 0 54 12" aria-hidden="true"><use href="#g33" x="0"/><use href="#g2c" x="6"/><use href="#g34" x="12"/><use href="#g31" x="18"/><use href="#g31" x="24"/><use href="#g2c" x="30"/><use href="#g30" x="36"/><use href="#g32" x="42"/><use href="#g39" x="48"/></svg></td></tr>
<tr class="c"><td><span class="h">11,200,000</span><svg class="t" width="60" height="12" viewBox="0 0 60 12" aria-hidden="true"><use href="#g31" x="0"/><use href="#g31" x="6"/><use href="#g2c" x="12"/><use href="#g32" x="18"/><use href="#g30" x="24"/><use href="#g30" x="30"/><use href="#g2c" x="36"/><use href="#g30" x="42"/><use href="#g30" x="48"/><use href="#g30" x="54"/></svg></td><td><span class="h">11,200,000</span><svg class="t" width="60" height="12" viewBox="0 0 60 12" aria-hidden="true"><use href="#g31" x="0"/><use href="#g31" x="6"/><use href="#g2c" x="12"/><use href="#g32" x="18"/><use href="#g30" x="24"/><use href="#g30" x="30"/><use href="#g2c" x="36"/><use href="#g30" x="42"/><use href="#g30" x="48"/><use href="#g30" x="54"/></svg></td><td class="n"><span class="h">◁유형자산▷</span><svg class="t" width="132" height="12" viewBox="0 0 132 12" aria-hidden="true" style="margin-left:29px"><use href="#g25c1" x="0"/><use href="#gc720" x="12"/><use href="#gd615" x="48"/><use href="#gc790" x="78"/><use href="#gc0b0" x="108"/><use href="#g25b7" x="120"/></svg></td><td><span class="h">3,411,029</span><svg class="t" width="54" height="12" viewBox="0 0 54 12" aria-hidden="true"><use href="#g33" x="0"/><use href="#g2c" x="6"/><use href="#g34" x="12"/><use href="#g31" x="18"/><use href="#g31" x="24"/><use href="#g2c" x="30"/><use href="#g30" x="36"/><use href="#g32" x="42"/><use href="#g39" x="48"/></svg></td><td><span class="h">3,411,029</span><svg class="t" width="54" height="12" viewBox="0 0 54 12" aria-hidden="true"><use href="#g33" x="0"/><use href="#g2c" x="6"/><use href="#g34" x="12"/><use href="#g31" x="18"/><use href="#g31" x="24"/><use href="#g2c" x="30"/><use href="#g30" x="36"/><use href="#g32" x="42"/><use href="#g39" x="48"/></svg></td></tr>
<tr><td><span class="h">10,000,000</span><svg class="t" width="60" height="12" viewBox="0 0 60 12" aria-hidden="true"><use href="#g31" x="0"/><use href="#g30" x="6"/><use href="#g2c" x="12"/><use href="#g30" x="18"/><use href="#g30" x="24"/><use href="#g30" x="30"/><use href="#g2c" x="36"/><use href="#g30" x="42"/><use href="#g30" x="48"/><use href="#g30" x="54"/></svg></td><td><span class="h">10,000,000</span><svg class="t" width="60" height="12" viewBox="0 0 60 12" aria-hidden="true"><use href="#g31" x="0"/><use href="#g30" x="6"/><use href="#g2c" x="12"/><use href="#g30" x="18"/><use href="#g30" x="24"/><use href="#g30" x="30"/><use href="#g2c" x="36"/><use href="#g30" x="42"/><use href="#g30" x="48"/><use href="#g30" x="54"/></svg></td><td class="n"><span class="h">기계장치</span><svg class="t" width="108" height="12" viewBox="0 0 108 12" aria-hidden="true" style="margin-left:41px"><use href="#gae30" x="0"/><use href="#gacc4" x="36"/><use href="#gc7a5" x="66"/><use href="#gce58" x="96"/></svg></td><td></td><td></td></tr>
<tr><td></td><td></td><td class="n"><span class="h">감가상각누계액</span><svg class="t" width="108" height="12" viewBox="0 0 108 12" aria-hidden="true" style="margin-left:41px"><use href="#gac10" x="0"/><use href="#gac00" x="18"/><use href="#gc0c1" x="36"/><use href="#gac01" x="54"/><use href="#gb204" x="72"/><use href="#gacc4" x="84"/><use href="#gc561" x="96"/></svg></td><td><span class="h">3,229,729</span><svg class="t" width="54" height="12" viewBox="0 0 54 12" aria-hidden="true"><use href="#g33" x="0"/><use href="#g2c" x="6"/><use href="#g32" x="12"/><use href="#g32" x="18"/><use href="#g39" x="24"/><use href="#g2c" x="30"/><use href="#g37" x="36"/><use href="#g32" x="42"/><use href="#g39" x="48"/></svg></td><td><span class="h">3,229,729</span><svg class="t" width="54" height="12" viewBox="0 0 54 12" aria-hidden="true"><use href="#g33" x="0"/><use href="#g2c" x="6"/><use href="#g32" x="12"/><use href="#g32" x="18"/><use href="#g39" x="24"/><use href="#g2c" x="30"/><use href="#g37" x="36"/><use href="#g32" x="42"/><use href="#g39" x="48"/></svg></td></tr>
<tr><td><span class="h">1,200,000</span><svg class="t" width="54" height="12" viewBox="0 0 54 12" aria-hidden="true"><use href="#g31" x="0"/><use href="#g2c" x="6"/><use href="#g32" x="12"/><use href="#g30" x="18"/><use href="#g30" x="24"/><use href="#g2c" x="30"/><use href="#g30" x="36"/><use href="#g30" x="42"/><use href="#g30" x="48"/></svg></td><td><span class="h">1,200,000</span><svg class="t" width="54" height="12" viewBox="0 0 54 12" aria-hidden="true"><use href="#g31" x="0"/><use href="#g2c" x="6"/><use href="#g32" x="12"/><use href="#g30" x="18"/><use href="#g30" x="24"/><use href="#g2c" x="30"/><use href="#g30" x="36"/><use href="#g30" x="42"/><use href="#g30" x="48"/></svg></td><td class="n"><span class="h">비품</span><svg class="t" width="108" height="12" viewBox="0 0 108 12" aria-hidden="true" style="margin-left:41px"><use href="#gbe44" x="0"/><use href="#gd488" x="96"/></svg></td><td></td><td></td></tr>
<tr><td></td><td></td><td class="n"><span class="h">감가상각누계액</span><svg class="t" width="108" height="12" viewBox="0 0 108 12" aria-hidden="true" style="margin-left:41px"><use href="#gac10" x="0"/><use href="#gac00" x="18"/><use href="#gc0c1" x="36"/><use href="#gac01" x="54"/><use href="#gb204" x="72"/><use href="#gacc4" x="84"/><use href="#gc561" x="96"/></svg></td><td><span class="h">181,300</span><svg class="t" width="42" height="12" viewBox="0 0 42 12" aria-hidden="true"><use href="#g31" x="0"/><use href="#g38" x="6"/><use href="#g31" x="12"/><use href="#g2c" x="18"/><use href="#g33" x="24"/><use href="#g30" x="30"/><use href="#g30" x="36"/></svg></td><td><span class="h">181,300</span><svg class="t" width="42" height="12" viewBox="0 0 42 12" aria-hidden="true"><use href="#g31" x="0"/><use href="#g38" x="6"/><use href="#g31" x="12"/><use href="#g2c" x="18"/><use href="#g33" x="24"/><use href="#g30" x="30"/><use href="#g30" x="36"/></svg></td></tr>
<tr class="g"><td></td><td><span class="h">8,099,851</span><svg class="t" width="54" height="12" viewBox="0 0 54 12" aria-hidden="true"><use href="#g38" x="0"/><use href="#g2c" x="6"/><use href="#g30" x="12"/><use href="#g39" x="18"/><use href="#g39" x="24"/><use href="#g2c" x="30"/><use href="#g38" x="36"/><use href="#g35" x="42"/><use href="#g31" x="48"/></svg></td><td class="n"><span class="h">◀유동부채▶</span><svg class="t" width="132" height="12" viewBox="0 0 132 12" aria-hidden="true" style="margin-left:29px"><use href="#g25c0" x="0"/><use href="#gc720" x="12"/><use href="#gb3d9" x="48"/><use href="#gbd80" x="78"/><use href="#gcc44" x="108"/><use href="#g25b6" x="120"/></svg></td><td><span class="h">624,984,694</span><svg class="t" width="66" height="12" viewBox="0 0 66 12" aria-hidden="true"><use href="#g36" x="0"/><use href="#g32" x="6"/><use href="#g34" x="12"/><use href="#g2c" x="18"/><use href="#g39" x="24"/><use href="#g38" x="30"/><use href="#g34" x="36"/><use href="#g2c" x="42"/><use href="#g36" x="48"/><use href="#g39" x="54"/><use href="#g34" x="60"/></svg></td><td><span class="h">616,884,843</span><svg class="t" width="66" height="12" viewBox="0 0 66 12" aria-hidden="true"><use href="#g36" x="0"/><use href="#g31" x="6"/><use href="#g36" x="12"/><use href="#g2c" x="18"/><use href="#g38" x="24"/><use href="#g38" x="30"/><use href="#g34" x="36"/><use href="#g2c" x="42"/><use href="#g38" x="48"/><use href="#g34" x="54"/><use href="#g33" x="60"/></svg></td></tr>
<tr><td></td><td></td><td class="n"><span class="h">외상매입금</span><svg class="t" width="108" height="12" viewBox="0 0 108 12" aria-hidden="true" style="margin-left:41px"><use href="#gc678" x="0"/><use href="#gc0c1" x="24"/><use href="#gb9e4" x="48"/><use href="#gc785" x="72"/><use href="#gae08" x="96"/></svg></td><td><span class="h">595,345,333</span><svg class="t" width="66" height="12" viewBox="0 0 66 12" aria-hidden="true"><use href="#g35" x="0"/><use href="#g39" x="6"/><use href="#g35" x="12"/><use href="#g2c" x="18"/><use href="#g33" x="24"/><use href="#g34" x="30"/><use href="#g35" x="36"/><use href="#g2c" x="42"/><use href="#g33" x="48"/><use href="#g33" x="54"/><use href="#g33" x="60"/></svg></td><td><span class="h">595,345,333</span><svg class="t" width="66" height="12" viewBox="0 0 66 12" aria-hidden="true"><use href="#g35" x="0"/><use href="#g39" x="6"/><use href="#g35" x="12"/><use href="#g2c" x="18"/><use href="#g33" x="24"/><use href="#g34" x="30"/><use href="#g35" x="36"/><use href="#g2c" x="42"/><use href="#g33" x="48"/><use href="#g33" x="54"/><use href="#g33" x="60"/></svg></td></tr>
<tr class="s"><td></td><td><span class="h">8,099,851</span><svg class="t" width="54" height="12" viewBox="0 0 54 12" aria-hidden="true"><use href="#g38" x="0"/><use href="#g2c" x="6"/><use href="#g30" x="12"/><use href="#g39" x="18"/><use href="#g39" x="24"/><use href="#g2c" x="30"/><use href="#g38" x="36"/><use href="#g35" x="42"/><use href="#g31" x="48"/></svg></td><td class="n"><span class="h">부가세예수금</span><svg class="t" width="108" height="12" viewBox="0 0 108 12" aria-hidden="true" style="margin-left:41px"><use href="#gbd80" x="0"/><use href="#gac00" x="24"/><use href="#gc138" x="42"/><use href="#gc608" x="60"/><use href="#gc218" x="78"/><use href="#gae08" x="96"/></svg></td><td><span class="h">9,786,461</span><svg class="t" width="54" height="12" viewBox="0 0 54 12" aria-hidden="true"><use href="#g39" x="0"/><use href="#g2c" x="6"/><use href="#g37" x="12"/><use href="#g38" x="18"/><use href="#g36" x="24"/><use href="#g2c" x="30"/><use href="#g34" x="36"/><use href="#g36" x="42"/><use href="#g31" x="48"/></svg></td><td class="cur"><span class="h">1,686,610</span><svg class="t w" width="54" height="12" viewBox="0 0 54 12" aria-hidden="true"><use href="#g31" x="0"/><use href="#g2c" x="6"/><use href="#g36" x="12"/><use href="#g38" x="18"/><use href="#g36" x="24"/><use href="#g2c" x="30"/><use href="#g36" x="36"/><use href="#g31" x="42"/><use href="#g30" x="48"/></svg></td></tr>
<tr><td></td><td></td><td class="n"><span class="h">미지급비용</span><svg class="t" width="108" height="12" viewBox="0 0 108 12" aria-hidden="true" style="margin-left:41px"><use href="#gbbf8" x="0"/><use href="#gc9c0" x="24"/><use href="#gae09" x="48"/><use href="#gbe44" x="72"/><use href="#gc6a9" x="96"/></svg></td><td><span class="h">19,852,900</span><svg class="t" width="60" height="12" viewBox="0 0 60 12" aria-hidden="true"><use href="#g31" x="0"/><use href="#g39" x="6"/><use href="#g2c" x="12"/><use href="#g38" x="18"/><use href="#g35" x="24"/><use href="#g32" x="30"/><use href="#g2c" x="36"/><use href="#g39" x="42"/><use href="#g30" x="48"/><use href="#g30" x="54"/></svg></td><td><span class="h">19,852,900</span><svg class="t" width="60" height="12" viewBox="0 0 60 12" aria-hidden="true"><use href="#g31" x="0"/><use href="#g39" x="6"/><use href="#g2c" x="12"/><use href="#g38" x="18"/><use href="#g35" x="24"/><use href="#g32" x="30"/><use href="#g2c" x="36"/><use href="#g39" x="42"/><use href="#g30" x="48"/><use href="#g30" x="54"/></svg></td></tr>
<tr class="g"><td></td><td></td><td class="n"><span class="h">◀이익잉여금▶</span><svg class="t" width="132" height="12" viewBox="0 0 132 12" aria-hidden="true" style="margin-left:29px"><use href="#g25c0" x="0"/><use href="#gc774" x="12"/><use href="#gc775" x="36"/><use href="#gc789" x="60"/><use href="#gc5ec" x="84"/><use href="#gae08" x="108"/><use href="#g25b6" x="120"/></svg></td><td><span class="h">503,664,666</span><svg class="t" width="66" height="12" viewBox="0 0 66 12" aria-hidden="true"><use href="#g35" x="0"/><use href="#g30" x="6"/><use href="#g33" x="12"/><use href="#g2c" x="18"/><use href="#g36" x="24"/><use href="#g36" x="30"/><use href="#g34" x="36"/><use href="#g2c" x="42"/><use href="#g36" x="48"/><use href="#g36" x="54"/><use href="#g36" x="60"/></svg></td><td><span class="h">503,664,666</span><svg class="t" width="66" height="12" viewBox="0 0 66 12" aria-hidden="true"><use href="#g35" x="0"/><use href="#g30" x="6"/><use href="#g33" x="12"/><use href="#g2c" x="18"/><use href="#g36" x="24"/><use href="#g36" x="30"/><use href="#g34" x="36"/><use href="#g2c" x="42"/><use href="#g36" x="48"/><use href="#g36" x="54"/><use href="#g36" x="60"/></svg></td></tr>
<tr><td></td><td></td><td class="n"></td><td></td><td></td></tr>
</tbody></table></div>
<svg class="marks" width="775" height="614" viewBox="0 0 775 614"><path d="M108.3 280.5H117L133.5 277.5H164.5"/><path d="M690.5 280.5H699.5L701 281.5H705.5L707 282.5H751.5"/><path d="M737.5 570.5H752.5"/></svg>
</body>
</html>
